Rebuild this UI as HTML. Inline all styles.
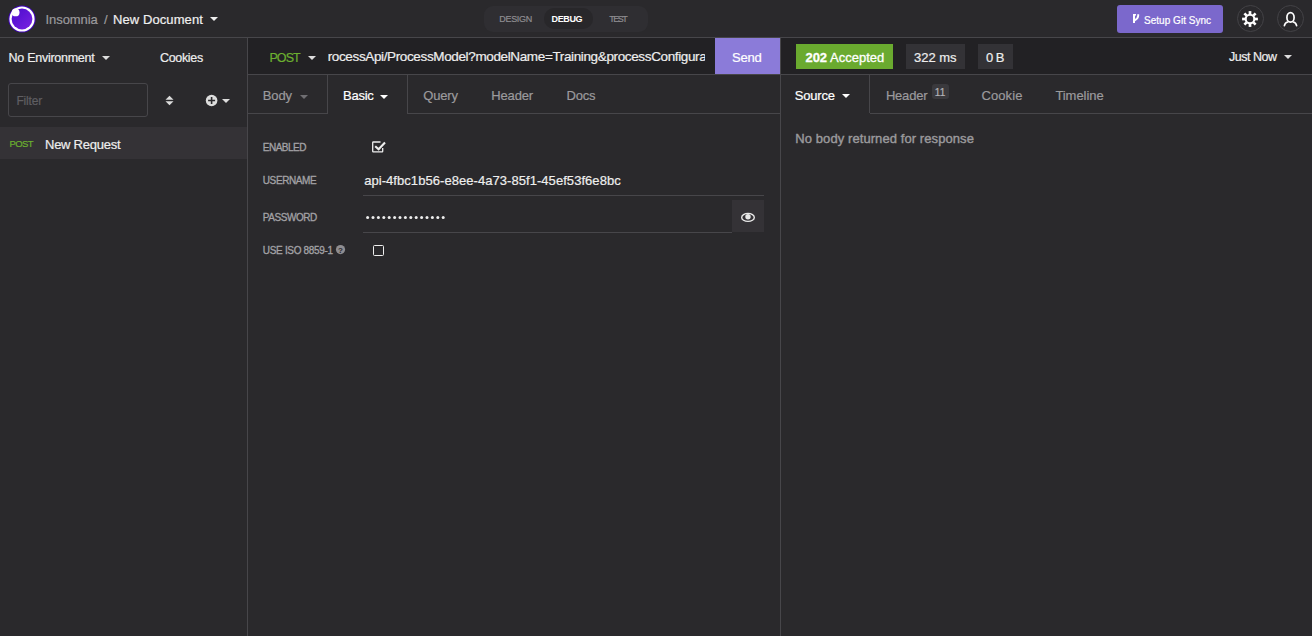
<!DOCTYPE html>
<html><head><meta charset="utf-8"><title>Insomnia</title>
<style>
*{margin:0;padding:0;box-sizing:border-box}
html,body{width:1312px;height:636px;overflow:hidden;background:#2a292c;font-family:"Liberation Sans",sans-serif}
.a{position:absolute}
.t{position:absolute;white-space:nowrap;line-height:1;-webkit-text-stroke:0.2px currentColor}
</style></head><body>
<div class="a" style="left:0px;top:37px;width:1312px;height:1px;background:#47464a;"></div>
<svg class="a" style="left:7px;top:4px" width="30" height="30" viewBox="0 0 30 30">
<circle cx="15" cy="15" r="13.6" fill="#4000bf"/><circle cx="15" cy="15" r="12.6" fill="#fff"/>
<defs><linearGradient id="lg" x1="0" y1="0" x2="1" y2="1"><stop offset="0" stop-color="#4a0ccc"/><stop offset="1" stop-color="#7a22e2"/></linearGradient></defs>
<circle cx="15" cy="15" r="10.4" fill="url(#lg)"/><circle cx="8.6" cy="8.4" r="3.9" fill="#fff"/></svg>
<div class="t" style="left:45.5px;top:13px;font-size:13px;font-weight:400;color:#9b9a9d;letter-spacing:-0.071px">Insomnia</div>
<div class="t" style="left:104px;top:13px;font-size:13px;font-weight:400;color:#9b9a9d;letter-spacing:0.0px">/</div>
<div class="t" style="left:113px;top:13px;font-size:13px;font-weight:400;color:#f0f0f0;letter-spacing:0.091px">New Document</div>
<svg class="a" style="left:210px;top:17px" width="8" height="4" viewBox="0 0 8 4"><path d="M0 0H8L4.0 4Z" fill="#eeeeee"/></svg>
<div class="a" style="left:484px;top:6px;width:164px;height:26px;background:#2f2e32;border-radius:9px"></div>
<div class="a" style="left:544px;top:8px;width:49px;height:21px;background:#28272a;border-radius:10px"></div>
<div class="t" style="left:499.3px;top:15px;font-size:9px;font-weight:400;color:#8e8d91;letter-spacing:-0.32px">DESIGN</div>
<div class="t" style="-webkit-text-stroke:0.01px currentColor;left:551.6px;top:15px;font-size:9px;font-weight:700;color:#ffffff;letter-spacing:-0.4px">DEBUG</div>
<div class="t" style="left:609.2px;top:15px;font-size:9px;font-weight:400;color:#8e8d91;letter-spacing:-1.467px">TEST</div>
<div class="a" style="left:1117px;top:5px;width:106px;height:28px;background:#7b68cc;border-radius:3px"></div>
<svg class="a" style="left:1132px;top:14px" width="8" height="9" viewBox="0 0 8 9"><rect x="1" y="0" width="2" height="9" fill="#fff"/><rect x="1" y="0" width="3" height="1.6" fill="#fff"/><path d="M6.2 0.2V1.8Q6.2 4.6 2.6 6.4" stroke="#fff" stroke-width="1.9" fill="none"/></svg>
<div class="t" style="left:1144px;top:16px;font-size:10px;font-weight:400;color:#ffffff;letter-spacing:0.031px">Setup Git Sync</div>
<div class="a" style="left:1237px;top:5px;width:27px;height:27px;background:transparent;border:1px solid #434246;border-radius:50%;box-sizing:border-box"></div>
<div class="a" style="left:1277px;top:5px;width:27px;height:27px;background:transparent;border:1px solid #434246;border-radius:50%;box-sizing:border-box"></div>
<svg class="a" style="left:1240px;top:9px" width="20" height="20" viewBox="0 0 20 20"><g stroke="#fff" stroke-width="2.7"><line x1="14.80" y1="10.00" x2="17.90" y2="10.00"/><line x1="13.39" y1="13.39" x2="15.59" y2="15.59"/><line x1="10.00" y1="14.80" x2="10.00" y2="17.90"/><line x1="6.61" y1="13.39" x2="4.41" y2="15.59"/><line x1="5.20" y1="10.00" x2="2.10" y2="10.00"/><line x1="6.61" y1="6.61" x2="4.41" y2="4.41"/><line x1="10.00" y1="5.20" x2="10.00" y2="2.10"/><line x1="13.39" y1="6.61" x2="15.59" y2="4.41"/></g><circle cx="10" cy="10" r="4.3" stroke="#fff" stroke-width="2.1" fill="none"/></svg>
<svg class="a" style="left:1280px;top:8px" width="21" height="21" viewBox="0 0 21 21"><ellipse cx="10.5" cy="9.4" rx="3.6" ry="4.7" stroke="#fff" stroke-width="1.7" fill="none"/><path d="M4.4 17.6Q4.9 14.8 7.7 14.0M16.6 17.6Q16.1 14.8 13.3 14.0" stroke="#fff" stroke-width="1.7" fill="none" stroke-linecap="round"/></svg>
<div class="a" style="left:247px;top:38px;width:1px;height:598px;background:#47464a;"></div>
<div class="t" style="left:8.5px;top:52px;font-size:12.5px;font-weight:400;color:#eeeeee;letter-spacing:-0.262px">No Environment</div>
<svg class="a" style="left:102px;top:56px" width="8" height="4" viewBox="0 0 8 4"><path d="M0 0H8L4.0 4Z" fill="#dddddd"/></svg>
<div class="t" style="left:160px;top:52px;font-size:12.5px;font-weight:400;color:#eeeeee;letter-spacing:-0.333px">Cookies</div>
<div class="a" style="left:8px;top:83px;width:140px;height:34px;background:transparent;border:1px solid #47464a;border-radius:3px;box-sizing:border-box"></div>
<div class="t" style="left:16.4px;top:95px;font-size:12px;font-weight:400;color:#5f5e62;letter-spacing:-0.18px">Filter</div>
<svg class="a" style="left:165px;top:95px" width="9" height="11" viewBox="0 0 9 11"><path d="M4.5 0.8L8.5 4.8H0.5Z M0.5 6.2H8.5L4.5 10.2Z" fill="#ddd"/></svg>
<svg class="a" style="left:205px;top:94px" width="13" height="13" viewBox="0 0 13 13"><circle cx="6.6" cy="6.5" r="5.8" fill="#ddd"/><path d="M6.6 3V10M3.1 6.5H10.1" stroke="#2a292c" stroke-width="1.6"/></svg>
<svg class="a" style="left:222px;top:99px" width="8" height="4" viewBox="0 0 8 4"><path d="M0 0H8L4.0 4Z" fill="#dddddd"/></svg>
<div class="a" style="left:0px;top:127px;width:247px;height:32px;background:#343236;"></div>
<div class="t" style="left:9.6px;top:139px;font-size:9.5px;font-weight:400;color:#6cb030;letter-spacing:-0.633px">POST</div>
<div class="t" style="left:45px;top:138px;font-size:13px;font-weight:400;color:#eeeeee;letter-spacing:-0.25px">New Request</div>
<div class="a" style="left:248px;top:38px;width:532px;height:36px;background:#222124;"></div>
<div class="a" style="left:248px;top:74px;width:532px;height:1px;background:#47464a;"></div>
<div class="t" style="left:269.5px;top:52px;font-size:12.5px;font-weight:400;color:#6cb030;letter-spacing:-0.967px">POST</div>
<svg class="a" style="left:308px;top:56px" width="8" height="4" viewBox="0 0 8 4"><path d="M0 0H8L4.0 4Z" fill="#dddddd"/></svg>
<div class="t" style="left:327.7px;top:50px;font-size:13.5px;font-weight:400;color:#eeeeee;letter-spacing:-0.364px;width:377.3px;height:20px;overflow:hidden">rocessApi/ProcessModel?modelName=Training&amp;processConfiguration=Default</div>
<div class="a" style="left:715px;top:38px;width:65px;height:36px;background:#8b7bd9;"></div>
<div class="t" style="left:732px;top:51px;font-size:13px;font-weight:400;color:#ffffff;letter-spacing:-0.2px">Send</div>
<div class="a" style="left:248px;top:113px;width:80px;height:1px;background:#47464a;"></div>
<div class="a" style="left:407px;top:113px;width:373px;height:1px;background:#47464a;"></div>
<div class="a" style="left:327px;top:75px;width:1px;height:38px;background:#47464a;"></div>
<div class="a" style="left:407px;top:75px;width:1px;height:38px;background:#47464a;"></div>
<div class="t" style="left:262.7px;top:89px;font-size:13px;font-weight:400;color:#9b9a9d;letter-spacing:-0.067px">Body</div>
<svg class="a" style="left:300px;top:95px" width="8" height="4" viewBox="0 0 8 4"><path d="M0 0H8L4.0 4Z" fill="#6f6e72"/></svg>
<div class="t" style="left:343px;top:89px;font-size:13px;font-weight:400;color:#ffffff;letter-spacing:-0.25px">Basic</div>
<svg class="a" style="left:380px;top:95px" width="8" height="4" viewBox="0 0 8 4"><path d="M0 0H8L4.0 4Z" fill="#ffffff"/></svg>
<div class="t" style="left:423.3px;top:89px;font-size:13px;font-weight:400;color:#9b9a9d;letter-spacing:-0.175px">Query</div>
<div class="t" style="left:491.3px;top:89px;font-size:13px;font-weight:400;color:#9b9a9d;letter-spacing:-0.16px">Header</div>
<div class="t" style="left:566.5px;top:89px;font-size:13px;font-weight:400;color:#9b9a9d;letter-spacing:-0.167px">Docs</div>
<div class="t" style="-webkit-text-stroke:0.3px currentColor;left:262.8px;top:143px;font-size:10px;font-weight:400;color:#a3a2a6;letter-spacing:-0.5px">ENABLED</div>
<svg class="a" style="left:371px;top:140px" width="16" height="14" viewBox="0 0 16 14"><path d="M9.5 2H2.3Q1.7 2 1.7 2.6V11.2Q1.7 11.8 2.3 11.8H11.1Q11.7 11.8 11.7 11.2V8" stroke="#eee" stroke-width="1.3" fill="none"/><path d="M4.2 6.2L7.6 9.3L14 2.6" stroke="#eee" stroke-width="2.1" fill="none"/></svg>
<div class="t" style="-webkit-text-stroke:0.3px currentColor;left:262.8px;top:176px;font-size:10px;font-weight:400;color:#a3a2a6;letter-spacing:-0.4px">USERNAME</div>
<div class="t" style="left:364.2px;top:174px;font-size:13px;font-weight:400;color:#eeeeee;letter-spacing:0.054px">api-4fbc1b56-e8ee-4a73-85f1-45ef53f6e8bc</div>
<div class="a" style="left:363px;top:195px;width:401px;height:1px;background:#47464a;"></div>
<div class="t" style="-webkit-text-stroke:0.3px currentColor;left:262.8px;top:213px;font-size:10px;font-weight:400;color:#a3a2a6;letter-spacing:-0.443px">PASSWORD</div>
<svg class="a" style="left:366px;top:216px" width="80" height="4" viewBox="0 0 80 4"><circle cx="1.60" cy="1.6" r="1.5" fill="#eee"/><circle cx="7.00" cy="1.6" r="1.5" fill="#eee"/><circle cx="12.40" cy="1.6" r="1.5" fill="#eee"/><circle cx="17.80" cy="1.6" r="1.5" fill="#eee"/><circle cx="23.20" cy="1.6" r="1.5" fill="#eee"/><circle cx="28.60" cy="1.6" r="1.5" fill="#eee"/><circle cx="34.00" cy="1.6" r="1.5" fill="#eee"/><circle cx="39.40" cy="1.6" r="1.5" fill="#eee"/><circle cx="44.80" cy="1.6" r="1.5" fill="#eee"/><circle cx="50.20" cy="1.6" r="1.5" fill="#eee"/><circle cx="55.60" cy="1.6" r="1.5" fill="#eee"/><circle cx="61.00" cy="1.6" r="1.5" fill="#eee"/><circle cx="66.40" cy="1.6" r="1.5" fill="#eee"/><circle cx="71.80" cy="1.6" r="1.5" fill="#eee"/><circle cx="77.20" cy="1.6" r="1.5" fill="#eee"/></svg>
<div class="a" style="left:363px;top:232px;width:369px;height:1px;background:#47464a;"></div>
<div class="a" style="left:732px;top:200px;width:32px;height:32px;background:#343236;"></div>
<svg class="a" style="left:740px;top:212px" width="16" height="11" viewBox="0 0 16 11"><ellipse cx="8" cy="5.4" rx="6.3" ry="4.0" stroke="#e8e8e8" stroke-width="1.4" fill="none"/><circle cx="8" cy="4.8" r="2.7" fill="#e8e8e8"/></svg>
<div class="t" style="-webkit-text-stroke:0.3px currentColor;left:262.8px;top:246px;font-size:10px;font-weight:400;color:#a3a2a6;letter-spacing:-0.315px">USE ISO 8859-1</div>
<svg class="a" style="left:335px;top:244px" width="11" height="11" viewBox="0 0 11 11"><circle cx="5.5" cy="5.6" r="4.6" fill="#8e8d91"/><text x="5.5" y="8.7" font-family="Liberation Sans" font-weight="bold" font-size="8" text-anchor="middle" fill="#2a292c">?</text></svg>
<div class="a" style="left:373px;top:245px;width:11px;height:11px;background:transparent;border:1.4px solid #eee;border-radius:1.5px;box-sizing:border-box"></div>
<div class="a" style="left:780px;top:38px;width:1px;height:598px;background:#47464a;"></div>
<div class="a" style="left:781px;top:38px;width:531px;height:36px;background:#222124;"></div>
<div class="a" style="left:781px;top:74px;width:531px;height:1px;background:#47464a;"></div>
<div class="a" style="left:796px;top:44px;width:97px;height:25px;background:#6aaa2f;"></div>
<div class="t" style="-webkit-text-stroke:0.3px currentColor;left:805.4px;top:51px;font-size:13px;font-weight:400;color:#ffffff;letter-spacing:0.009px"><b>202</b> Accepted</div>
<div class="a" style="left:906px;top:44px;width:59px;height:25px;background:#333236;"></div>
<div class="t" style="left:913.9px;top:51px;font-size:13px;font-weight:400;color:#eeeeee;letter-spacing:0.02px">322 ms</div>
<div class="a" style="left:978px;top:44px;width:35px;height:25px;background:#333236;"></div>
<div class="t" style="left:986px;top:51px;font-size:13px;font-weight:400;color:#eeeeee;letter-spacing:-0.6px">0 B</div>
<div class="t" style="left:1229px;top:51px;font-size:12.5px;font-weight:400;color:#eeeeee;letter-spacing:-0.471px">Just Now</div>
<svg class="a" style="left:1284px;top:55px" width="8" height="4" viewBox="0 0 8 4"><path d="M0 0H8L4.0 4Z" fill="#dddddd"/></svg>
<div class="a" style="left:869px;top:75px;width:1px;height:38px;background:#47464a;"></div>
<div class="a" style="left:870px;top:113px;width:442px;height:1px;background:#47464a;"></div>
<div class="t" style="left:794.8px;top:89px;font-size:13px;font-weight:400;color:#ffffff;letter-spacing:-0.2px">Source</div>
<svg class="a" style="left:842px;top:94px" width="8" height="4" viewBox="0 0 8 4"><path d="M0 0H8L4.0 4Z" fill="#ffffff"/></svg>
<div class="t" style="left:885.9px;top:89px;font-size:13px;font-weight:400;color:#9b9a9d;letter-spacing:-0.2px">Header</div>
<div class="a" style="left:932px;top:84px;width:17px;height:15px;background:#3a393d;border-radius:3px"></div>
<div class="t" style="left:934.8px;top:88px;font-size:10px;font-weight:400;color:#b4b3b7;letter-spacing:0.2px">11</div>
<div class="t" style="left:981.4px;top:89px;font-size:13px;font-weight:400;color:#9b9a9d;letter-spacing:0.12px">Cookie</div>
<div class="t" style="left:1055.4px;top:89px;font-size:13px;font-weight:400;color:#9b9a9d;letter-spacing:-0.057px">Timeline</div>
<div class="t" style="-webkit-text-stroke:0.4px currentColor;left:795.3px;top:132px;font-size:13px;font-weight:400;color:#9b9a9d;letter-spacing:0.082px">No body returned for response</div>
</body></html>
